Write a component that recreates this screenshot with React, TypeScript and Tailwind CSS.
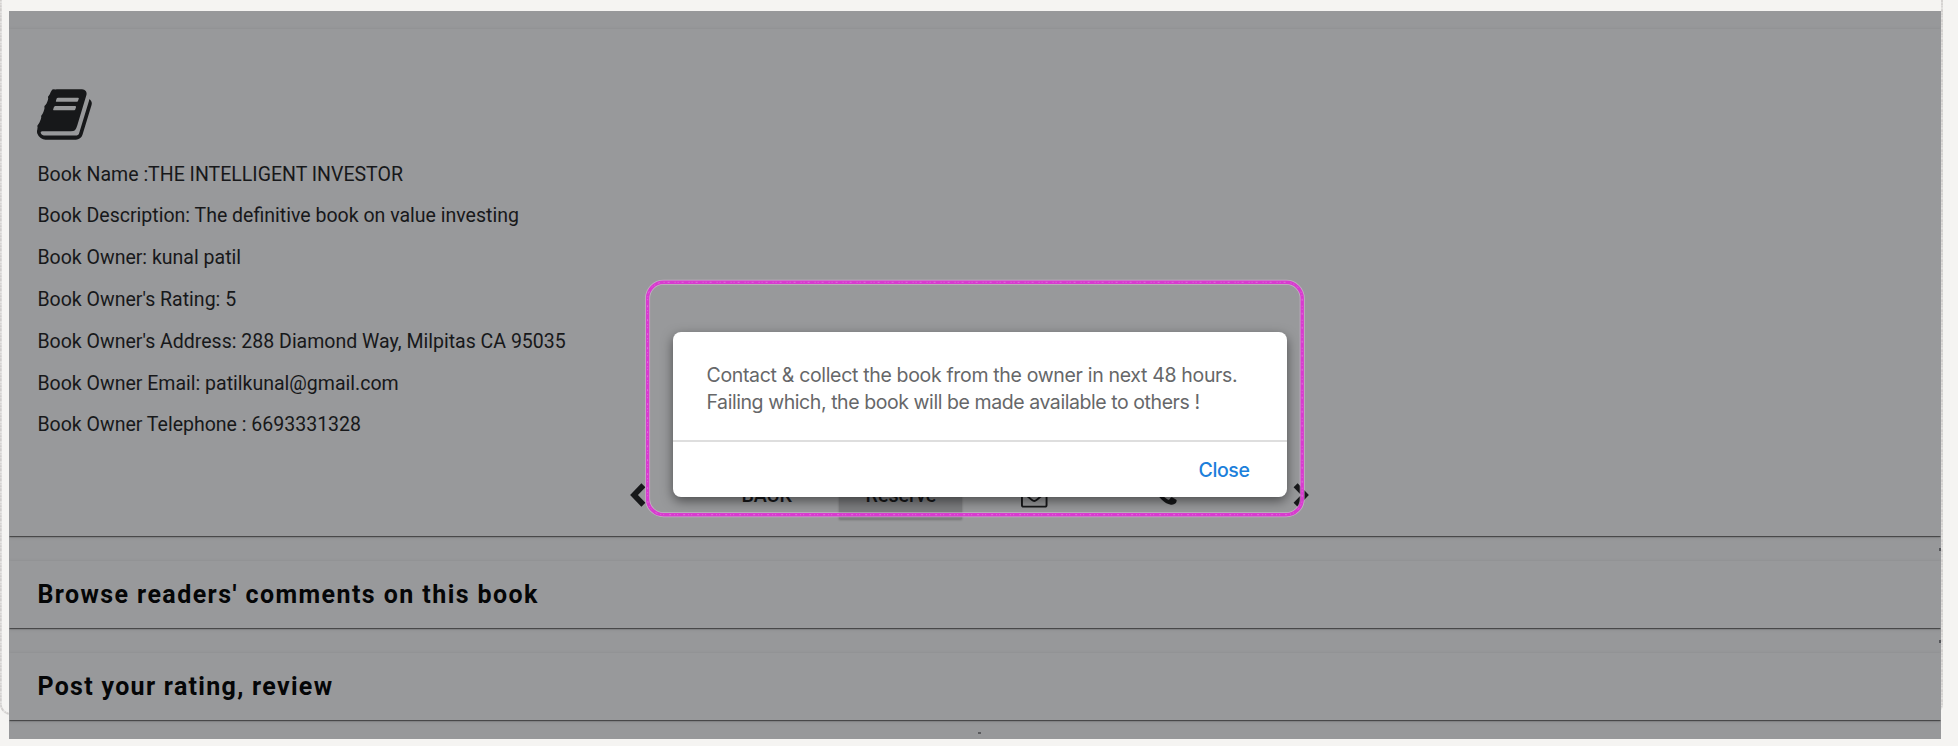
const BOOK =
  "M1639 478q40 57 18 129l-275 906q-19 64-76.5 107.5t-122.5 43.5h-923q-77 0-148.5-53.5t-99.5-131.5q-24-67-2-127 0-4 3-27t4-37q1-8-3-21.5t-3-19.5q2-11 8-21t16.5-23.5 16.5-23.5q23-38 45-91.5t30-91.5q3-10 .5-30t-.5-28q3-11 17-28t17-23q21-36 42-92t25-90q1-9-2.5-32t.5-28q4-13 22-30.5t22-22.5q19-26 42.5-84.5t27.5-96.5q1-8-3-25.5t-2-26.5q2-8 9-18t18-23 17-21q8-12 16.5-30.5t15-35 16-36 19.5-32 26.5-23.5 36-11.5 47.5 5.5l-1 3q38-9 51-9h761q74 0 114 56t18 130l-274 906q-36 119-71.5 153.5t-128.5 34.5h-869q-27 0-38 15-11 16-1 43 24 70 144 70h923q29 0 56-15.5t35-41.5l300-987q7-22 5-57 38 15 59 43zm-1064 2q-4 13 2 22.5t20 9.5h608q13 0 25.5-9.5t16.5-22.5l21-64q4-13-2-22.5t-20-9.5h-608q-13 0-25.5 9.5t-16.5 22.5zm-83 256q-4 13 2 22.5t20 9.5h608q13 0 25.5-9.5t16.5-22.5l21-64q4-13-2-22.5t-20-9.5h-608q-13 0-25.5 9.5t-16.5 22.5z";
const ENVELOPE =
  "M1664 1504v-768q-32 36-69 66-268 206-426 338-51 43-83 67t-86.5 48.5-102.5 24.5h-2q-48 0-102.5-24.5t-86.5-48.5-83-67q-158-132-426-338-37-30-69-66v768q0 13 9.5 22.5t22.5 9.5h1472q13 0 22.5-9.5t9.5-22.5zm0-1051v-24.5l-.5-13-3-12.5-5.5-9-9-7.5-14-2.5h-1472q-13 0-22.5 9.5t-9.5 22.5q0 168 147 284 193 152 401 317 6 5 35 29.5t46 37.5 44.5 31.5 50.5 27.5 43 9h2q20 0 43-9t50.5-27.5 44.5-31.5 46-37.5 35-29.5q208-165 401-317 54-43 100.5-115.5t46.5-131.5zm128-37v1088q0 66-47 113t-113 47h-1472q-66 0-113-47t-47-113v-1088q0-66 47-113t113-47h1472q66 0 113 47t47 113z";
const PHONE =
  "M1600 1240q0 27-10 70.5t-21 68.5q-21 50-122 106-94 51-186 51-27 0-53-3.5t-57.5-12.5-47-14.5-55.5-20.5-49-18q-98-35-175-83-127-79-264-216t-216-264q-48-77-83-175-3-9-18-49t-20.5-55.5-14.5-47-12.5-57.5-3.5-53q0-92 51-186 56-101 106-122 25-11 68.5-21t70.5-10q14 0 21 3 18 6 53 76 11 19 30 54t35 63.5 31 53.5q3 4 17.5 25t21.5 35.5 7 28.5q0 20-28.5 50t-62 55-62 53-28.5 46q0 9 5 22.5t8.5 20.5 14 24 11.5 19q76 137 174 235t235 174q2 1 19 11.5t24 14 20.5 8.5 22.5 5q18 0 46-28.5t53-62 55-62 50-28.5q14 0 28.5 7t35.5 21.5 25 17.5q25 15 53.5 31t63.5 35 54 30q70 35 76 53 3 7 3 21z";

function Glyph({ d, className }: { d: string; className: string }) {
  return (
    <svg viewBox="0 0 1792 1792" fill="currentColor" className={className}>
      <path d={d} />
    </svg>
  );
}

function Chevron({ className }: { className: string }) {
  return (
    <svg viewBox="0 0 16 24" fill="none" stroke="currentColor" strokeWidth="5.6" className={className}>
      <path d="M13.4 2.2 4 12l9.4 9.8" />
    </svg>
  );
}

const details = [
  "Book Name :THE INTELLIGENT INVESTOR",
  "Book Description: The definitive book on value investing",
  "Book Owner: kunal patil",
  "Book Owner's Rating: 5",
  "Book Owner's Address: 288 Diamond Way, Milpitas CA 95035",
  "Book Owner Email: patilkunal@gmail.com",
  "Book Owner Telephone : 6693331328",
];

const card =
  "bg-[#98999b] shadow-[0_2px_1px_-1px_rgba(0,0,0,0.38),0_1px_1px_0_rgba(0,0,0,0.16),0_1px_4px_0_rgba(0,0,0,0.13)]";

export default function App() {
  return (
    <div className="relative h-[746px] w-[1958px] overflow-hidden bg-[#f5f4f2] pt-[11px] pl-[9px] font-[Roboto,sans-serif]">
      <svg className="absolute top-0 left-0 h-[746px] w-[1958px]" fill="none">
        <rect x="0.8" y="-20" width="1941.2" height="734" rx="10" stroke="#e4e3e1" strokeWidth="2" />
        <rect x="0.8" y="-20" width="1941.2" height="734" rx="10" stroke="#d0cdcc" strokeWidth="1.6" strokeDasharray="2 1 1 2 3 1" />
      </svg>

      <main className="relative flex h-[728px] w-[1932px] flex-col gap-[25px] overflow-hidden bg-[#97989a] pt-[18px] text-[#17181a]">
        <section className={`flex h-[507px] shrink-0 flex-col pl-[28.4px] ${card}`}>
          <Glyph d={BOOK} className="mt-[56px] h-[59px] w-[59px] shrink-0" />
          <div className="mt-[9.6px] flex flex-col text-[19.52px] leading-[41.8px]">
            {details.map((line) => (
              <p key={line}>{line}</p>
            ))}
          </div>
          <div className="mt-[24.4px] ml-[593px] flex h-[50px] w-[680px] items-center">
            <Chevron className="mb-[2px] h-6 w-4" />
            <span className="ml-[95px] w-[98px] pt-[1px] text-[19.6px] font-medium">BACK</span>
            <span className="flex h-[46px] w-[123px] items-center justify-center bg-[#7d7e80] text-[19.6px] font-medium shadow-[0_1px_2px_rgba(0,0,0,0.25)]">
              Reserve
            </span>
            <Glyph d={ENVELOPE} className="mt-[2px] ml-[59px] h-[26.5px] w-[26.5px]" />
            <Glyph d={PHONE} className="ml-[105px] h-[26.5px] w-[26.5px]" />
            <Chevron className="mb-[2px] ml-[114px] h-6 w-4 rotate-180" />
          </div>
        </section>

        <section className={`flex h-[67px] shrink-0 items-center pt-[1px] pl-[28.4px] ${card}`}>
          <h2 className="text-[25px] font-bold tracking-[1.42px] text-[#050607]">Browse readers' comments on this book</h2>
        </section>
        <section className={`flex h-[67px] shrink-0 items-center pt-[1px] pl-[28.4px] ${card}`}>
          <h2 className="text-[25px] font-bold tracking-[1.3px] text-[#050607]">Post your rating, review</h2>
        </section>

        <i className="absolute top-[537px] right-0 h-[3px] w-[2px] bg-[#55565a]" />
        <i className="absolute top-[629px] right-0 h-[3px] w-[2px] bg-[#55565a]" />
        <i className="absolute top-[721px] left-[969px] h-[2px] w-[3px] bg-[#5a5b5e]" />
      </main>

      <div className="absolute top-[332px] left-[673px] flex h-[164.5px] w-[613.5px] flex-col rounded-[8px] bg-white font-[Inter,sans-serif] shadow-[0_4px_12px_rgba(0,0,0,0.5)]">
        <div className="h-[110px] border-b-2 border-[#dedede] pt-[30px] pl-[33.5px] text-[19.5px] leading-[26.6px] whitespace-nowrap text-[#666769]">
          <p className="tracking-[-0.33px]">Contact &amp; collect the book from the owner in next 48 hours.</p>
          <p className="tracking-[-0.43px]">Failing which, the book will be made available to others !</p>
        </div>
        <div className="flex flex-1 items-center justify-end pt-[2px] pr-[37px]">
          <button className="text-[19.5px] font-medium tracking-[-0.4px] text-[#1c7fdb]">Close</button>
        </div>
      </div>

      <svg className="absolute top-[276px] left-[642px] h-[246px] w-[668px]" fill="none">
        <rect x="5.6" y="6.3" width="654.6" height="232.4" rx="16" stroke="#dfc3df" strokeWidth="5" strokeOpacity="0.6" />
        <rect x="5.6" y="6.3" width="654.6" height="232.4" rx="16" stroke="#d83bcf" strokeWidth="3.4" />
        <rect x="5.6" y="6.3" width="654.6" height="232.4" rx="16" stroke="#e070da" strokeWidth="1" strokeDasharray="1 3 2 5 1 2" />
      </svg>
    </div>
  );
}
